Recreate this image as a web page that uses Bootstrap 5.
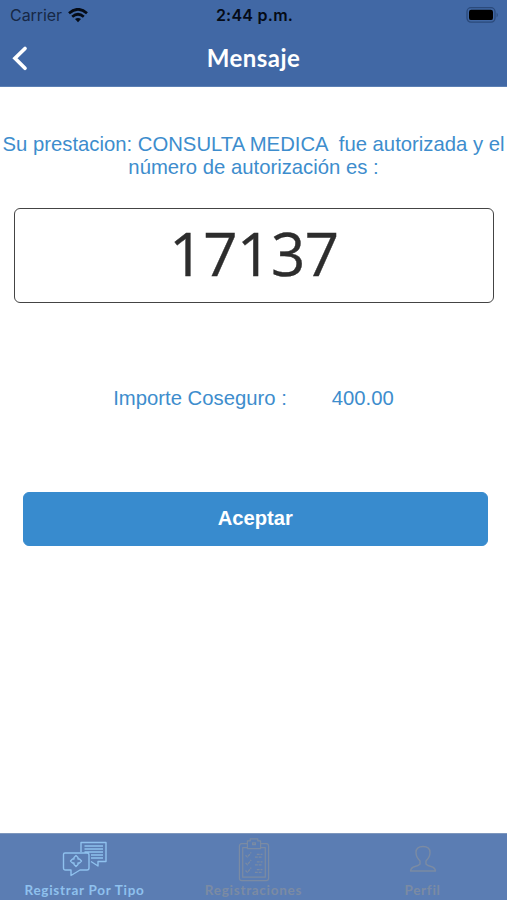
<!DOCTYPE html>
<html lang="es">
<head>
<meta charset="utf-8">
<meta name="viewport" content="width=device-width, initial-scale=1">
<title>Mensaje</title>
<link href="https://cdn.jsdelivr.net/npm/bootstrap@5.3.0/dist/css/bootstrap.min.css" rel="stylesheet">
<style>
body{font-family:"Liberation Sans",Arial,sans-serif;color:#3d8dcd;height:900px;overflow:hidden;background:#fff}
.app-header{background:#4168a5;height:87px;border-bottom:1px solid #5c80b4}
.status-row{height:30px;color:#0b1628;font:400 16px/30px Inter,sans-serif;padding:0 8px 0 10px}
.carrier{color:#172846;letter-spacing:-.05px}
.clock{font-weight:600;color:#050b16;letter-spacing:.25px}
.title-row{height:56px;padding:0 12px}
.title-row h1{font:700 24px/56px Lato,sans-serif;color:#fff;letter-spacing:.45px}
.side{flex:1 1 0}
.wifi{margin-left:6px}
.message{font-size:20.3px;line-height:23px;padding-top:46px;white-space:pre}
.code-box{margin:29px 13px 0 14px;height:95px;border:1.5px solid #444;border-radius:6px;color:#2d2d2d;font:500 60px/88px "Open Sans",sans-serif;letter-spacing:-.4px;-webkit-text-stroke:.4px #2d2d2d}
.amount-row{margin-top:84px;font-size:20.3px;line-height:23px;gap:45px}
.accept{margin:81.500px 19px 0 22.500px;height:54px;padding-top:6px;--bs-btn-bg:#388bce;--bs-btn-border-color:#388bce;--bs-btn-hover-bg:#2f7fc0;--bs-btn-color:#fff;--bs-btn-border-radius:6px;font-size:20.2px;font-weight:700}
.tabs{background:#5b7db3;height:67px;border-top:1px solid #7e97bd;color:#7b8ba3}
.tab-item{flex:1 1 0;font:700 13.5px/16px Lato,sans-serif;letter-spacing:.72px;padding-top:4px;color:inherit}
.tab-item.active{color:#8fc1ee}
.tab-item svg{display:block;margin-bottom:3px}
.tab-item .clipboard{margin-bottom:0}
</style>
<script src="https://cdn.jsdelivr.net/npm/bootstrap@5.3.0/dist/js/bootstrap.bundle.min.js"></script>
</head>
<body class="d-flex flex-column">
<header class="app-header flex-shrink-0">
  <div class="status-row d-flex align-items-center">
    <div class="side d-flex align-items-center"><span class="carrier">Carrier</span>
      <svg class="wifi" width="20" height="15" viewBox="0 0 20 15" fill="none" stroke="#050b16" stroke-width="2.7"><path d="M1 5.2Q10-2.6 19 5.2M4.2 8.7Q10 3.8 15.8 8.7"/><path d="M7 11.1Q10 8.7 13 11.1L10 14.2Z" fill="#050b16" stroke="none"/></svg>
    </div>
    <span class="clock">2:44 p.m.</span>
    <div class="side d-flex justify-content-end">
      <svg width="33" height="16" viewBox="0 0 33 16"><rect x="1" y=".7" width="28" height="14.4" rx="4" fill="none" stroke="#2b4a7b" stroke-width="1.3"/><rect x="3" y="2.7" width="24" height="10.4" rx="2.2" fill="#000"/><path d="M30.6 5.5Q33 8 30.6 10.5Z" fill="#2b4a7b"/></svg>
    </div>
  </div>
  <div class="title-row d-flex align-items-center">
    <div class="side"><svg class="d-block" width="16" height="26" viewBox="0 0 16 26" fill="none" stroke="#fff" stroke-width="3.7" stroke-linecap="round"><path d="M13 3.5 3 13.3 13 23.2"/></svg></div>
    <h1 class="m-0">Mensaje</h1>
    <div class="side"></div>
  </div>
</header>
<main class="d-flex flex-column flex-grow-1">
  <p class="message text-center m-0">Su prestacion: CONSULTA MEDICA  fue autorizada y el
número de autorización es :</p>
  <div class="code-box text-center">17137</div>
  <div class="amount-row d-flex justify-content-center"><span>Importe Coseguro :</span><span>400.00</span></div>
  <button type="button" class="btn accept">Aceptar</button>
</main>
<nav class="tabs d-flex flex-shrink-0">
  <a class="tab-item active d-flex flex-column align-items-center text-decoration-none" href="#">
    <svg width="46" height="41" viewBox="0 0 46 41" fill="none" stroke="currentColor" stroke-width="1.4" stroke-linejoin="round"><path d="M19 14V4.5H44V23.5H36V28L29 23.5M22.5 8H41M22.5 11H41M22.5 14H41M29 17H41M29 20H41M1.5 16.5Q1.5 15 3 15H25Q27 15 27 17V30Q27 32 25 32H18L9 37.500V32H3.500Q1.500 32 1.500 30Z"/><path d="M12 21v-1.500l2-2 2 2V21h1.500l2 2-2 2H16v1.500l-2 2-2-2V25h-1.500l-2-2 2-2Z"/></svg>
    <span>Registrar Por Tipo</span></a>
  <a class="tab-item d-flex flex-column align-items-center text-decoration-none" href="#">
    <svg class="clipboard" width="32" height="44" viewBox="0 0 34 46" preserveAspectRatio="none" fill="none" stroke="currentColor" stroke-width="1.3" stroke-linejoin="round"><path d="M10 6H4Q1.5 6 1.5 8.500V42Q1.500 44.500 4 44.500H30Q32.500 44.500 32.500 42V8.500Q32.500 6 30 6H24M10 10H5V41H29V10H24M10 3H13V.8H21V3H24V11H10ZM15.500 5h3v2h-3z"/><path d="m8 18 2 2 4-5M18 20h8M20 17h6M8 26l2 2 4-5M18 28h8M20 25h6M8 34l2 2 4-5M18 36h8M20 33h6" stroke-dasharray="3 1"/></svg>
    <span>Registraciones</span></a>
  <a class="tab-item d-flex flex-column align-items-center text-decoration-none" href="#">
    <svg width="30" height="41" viewBox="0 0 30 41" fill="none" stroke="currentColor" stroke-width="1.4" stroke-linejoin="round"><path d="M12 23C9 20 8 17 8 14.500Q8 8.500 15 8.500T22 14.500C22 17 21 20 18 23V26Q19 27.500 23 28.500Q27 29.500 27.500 33H2.500Q3 29.500 7 28.500Q11 27.500 12 26Z"/></svg>
    <span>Perfil</span></a>
</nav>
</body>
</html>
